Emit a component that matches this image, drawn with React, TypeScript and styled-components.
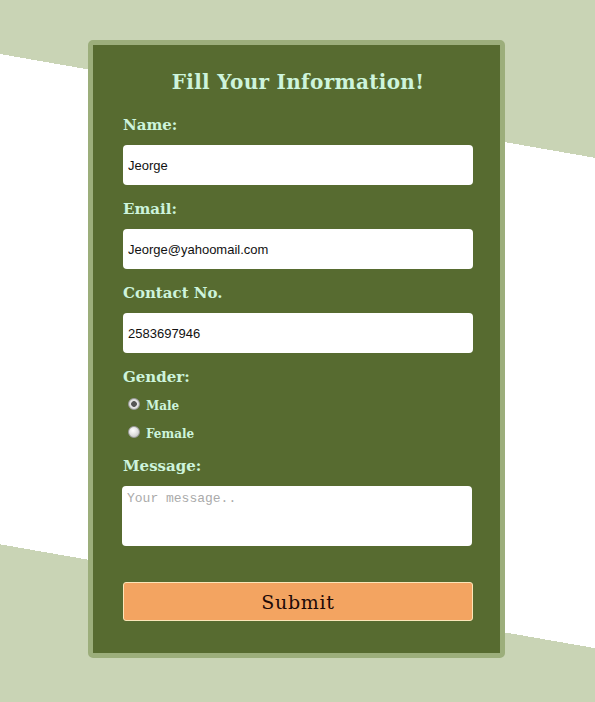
import { createGlobalStyle, styled } from "styled-components";

const GlobalStyle = createGlobalStyle`
  html, body {
    margin: 0;
    padding: 0;
  }
  body {
    font-family: "DejaVu Serif", "Liberation Serif", serif;
  }
`;

const Page = styled.div`
  height: 100vh;
  box-sizing: border-box;
  padding: 40px 2px 0 0;
  background: linear-gradient(
    189.9deg,
    #c9d4b5 0,
    #c9d4b5 155.5px,
    #ffffff 155.5px,
    #ffffff 638.5px,
    #c9d4b5 638.5px
  );
`;

const Card = styled.form`
  box-sizing: border-box;
  width: 417px;
  margin: 0 auto;
  padding: 22px 27px 32px 30px;
  background: #576b30;
  border: 5px solid #9cae7b;
  border-radius: 5px;
`;

const Title = styled.h2`
  margin: 0 0 18px;
  font-size: 20px;
  line-height: 30px;
  font-weight: bold;
  text-align: center;
  color: #cdf4dc;
  letter-spacing: 0.3px;
`;

const Field = styled.div<{ $gap?: number }>`
  margin-bottom: ${(p) => p.$gap ?? 14}px;
`;

const Label = styled.label<{ $tight?: boolean }>`
  display: block;
  margin-bottom: ${(p) => (p.$tight ? 5 : 10)}px;
  font-size: 15px;
  line-height: 20px;
  font-weight: bold;
  color: #cdf4dc;
`;

const TextInput = styled.input`
  box-sizing: border-box;
  display: block;
  width: 350px;
  height: 40px;
  padding: 0 5px;
  border: none;
  border-radius: 4px;
  background: #fff;
  font-family: "Liberation Sans", Arial, sans-serif;
  font-size: 13px;
  color: #111;
  outline: none;
`;

const RadioRow = styled.label`
  display: flex;
  align-items: center;
  height: 28px;
  padding-left: 5px;
  font-size: 12px;
  font-weight: bold;
  color: #cdf4dc;
`;

const Radio = styled.input`
  appearance: none;
  box-sizing: border-box;
  width: 12px;
  height: 12px;
  margin: -4px 6px 0 0;
  border-radius: 50%;
  border: 1px solid #9a9a9a;
  background: radial-gradient(circle at 40% 35%, #ffffff 0, #e4e4e4 45%, #b8b8b8 100%);

  &:checked {
    background: radial-gradient(circle, #555 0, #555 2.5px, #e8e8e8 3.2px, #c4c4c4 100%);
  }
`;

const MessageBox = styled.textarea`
  box-sizing: border-box;
  display: block;
  width: 350px;
  height: 60px;
  margin-left: -1px;
  padding: 5px;
  border: none;
  border-radius: 4px;
  resize: none;
  font-family: "Liberation Mono", "Courier New", monospace;
  font-size: 13px;
  outline: none;

  &::placeholder {
    color: #aaa;
  }
`;

const SubmitButton = styled.button`
  box-sizing: border-box;
  display: block;
  width: 350px;
  height: 39px;
  margin-top: 36px;
  border: 1px solid #fbe6b8;
  border-radius: 3px;
  background: #f3a461;
  font-family: "DejaVu Serif", "Liberation Serif", serif;
  font-size: 19px;
  letter-spacing: 0.7px;
  color: #1e0a08;
  cursor: pointer;
`;

const App = () => {
  return (
    <Page>
      <GlobalStyle />
      <Card onSubmit={(e) => e.preventDefault()}>
        <Title>Fill Your Information!</Title>
        <Field>
          <Label htmlFor="name">Name:</Label>
          <TextInput id="name" type="text" defaultValue="Jeorge" />
        </Field>
        <Field>
          <Label htmlFor="email">Email:</Label>
          <TextInput id="email" type="email" defaultValue="Jeorge@yahoomail.com" />
        </Field>
        <Field>
          <Label htmlFor="contact">Contact No.</Label>
          <TextInput id="contact" type="text" defaultValue="2583697946" />
        </Field>
        <Field $gap={8}>
          <Label as="div" $tight>
            Gender:
          </Label>
          <RadioRow>
            <Radio type="radio" name="gender" defaultChecked />
            Male
          </RadioRow>
          <RadioRow>
            <Radio type="radio" name="gender" />
            Female
          </RadioRow>
        </Field>
        <Field $gap={0}>
          <Label htmlFor="message">Message:</Label>
          <MessageBox id="message" placeholder="Your message.." />
        </Field>
        <SubmitButton type="submit">Submit</SubmitButton>
      </Card>
    </Page>
  );
};

export default App;
